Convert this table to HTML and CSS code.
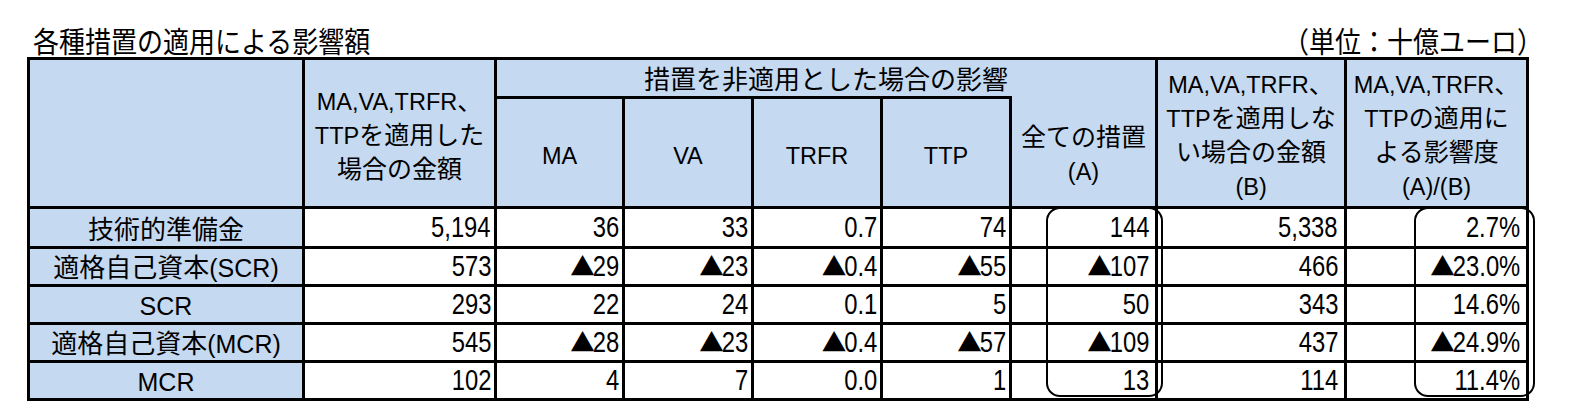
FILE: index.html
```html
<!DOCTYPE html>
<html lang="ja">
<head>
<meta charset="utf-8">
<title>各種措置の適用による影響額</title>
<link rel="stylesheet" href="styles.css">
</head>
<body>
<div class="page">
  <div class="caption">
    <div class="title">各種措置の適用による影響額</div>
    <div class="unit">（単位：十億ユーロ）</div>
  </div>
  <div class="wrap">
    <table class="grid">
      <colgroup>
        <col class="c-label">
        <col class="c-applied">
        <col class="c-ma">
        <col class="c-va">
        <col class="c-trfr">
        <col class="c-ttp">
        <col class="c-all">
        <col class="c-none">
        <col class="c-ratio">
      </colgroup>
      <thead>
        <tr class="h1">
          <th rowspan="2"></th>
          <th rowspan="2"><span class="l">MA,VA,TRFR</span>、<br><span class="l">TTP</span>を適用した<br>場合の金額</th>
          <th colspan="5" class="group">措置を非適用とした場合の影響</th>
          <th rowspan="2"><span class="l">MA,VA,TRFR</span>、<br><span class="l">TTP</span>を適用しな<br>い場合の金額<br><span class="l">(B)</span></th>
          <th rowspan="2"><span class="l">MA,VA,TRFR</span>、<br><span class="l">TTP</span>の適用に<br>よる影響度<br><span class="l">(A)/(B)</span></th>
        </tr>
        <tr class="h2">
          <th><span class="l">MA</span></th>
          <th><span class="l">VA</span></th>
          <th><span class="l">TRFR</span></th>
          <th><span class="l">TTP</span></th>
          <th class="all">全ての措置<br><span class="l">(A)</span></th>
        </tr>
      </thead>
      <tbody>
        <tr class="first">
          <th>技術的準備金</th>
          <td><span class="v">5,194</span></td>
          <td><span class="v">36</span></td>
          <td><span class="v">33</span></td>
          <td><span class="v">0.7</span></td>
          <td><span class="v">74</span></td>
          <td class="wide"><span class="v">144</span></td>
          <td class="wide"><span class="v">5,338</span></td>
          <td class="wide"><span class="v">2.7%</span></td>
        </tr>
        <tr>
          <th>適格自己資本<span class="l">(SCR)</span></th>
          <td><span class="v">573</span></td>
          <td><span class="v"><span class="tri">▲</span>29</span></td>
          <td><span class="v"><span class="tri">▲</span>23</span></td>
          <td><span class="v"><span class="tri">▲</span>0.4</span></td>
          <td><span class="v"><span class="tri">▲</span>55</span></td>
          <td class="wide"><span class="v"><span class="tri">▲</span>107</span></td>
          <td class="wide"><span class="v">466</span></td>
          <td class="wide"><span class="v"><span class="tri">▲</span>23.0%</span></td>
        </tr>
        <tr>
          <th><span class="l">SCR</span></th>
          <td><span class="v">293</span></td>
          <td><span class="v">22</span></td>
          <td><span class="v">24</span></td>
          <td><span class="v">0.1</span></td>
          <td><span class="v">5</span></td>
          <td class="wide"><span class="v">50</span></td>
          <td class="wide"><span class="v">343</span></td>
          <td class="wide"><span class="v">14.6%</span></td>
        </tr>
        <tr>
          <th>適格自己資本<span class="l">(MCR)</span></th>
          <td><span class="v">545</span></td>
          <td><span class="v"><span class="tri">▲</span>28</span></td>
          <td><span class="v"><span class="tri">▲</span>23</span></td>
          <td><span class="v"><span class="tri">▲</span>0.4</span></td>
          <td><span class="v"><span class="tri">▲</span>57</span></td>
          <td class="wide"><span class="v"><span class="tri">▲</span>109</span></td>
          <td class="wide"><span class="v">437</span></td>
          <td class="wide"><span class="v"><span class="tri">▲</span>24.9%</span></td>
        </tr>
        <tr>
          <th><span class="l">MCR</span></th>
          <td><span class="v">102</span></td>
          <td><span class="v">4</span></td>
          <td><span class="v">7</span></td>
          <td><span class="v">0.0</span></td>
          <td><span class="v">1</span></td>
          <td class="wide"><span class="v">13</span></td>
          <td class="wide"><span class="v">114</span></td>
          <td class="wide"><span class="v">11.4%</span></td>
        </tr>
      </tbody>
    </table>
    <div class="bracket b-all"></div>
    <div class="bracket b-ratio"></div>
  </div>
</div>
</body>
</html>
```
FILE: styles.css
```css
body {
  margin: 0;
  background: #ffffff;
  color: #000000;
  font-family: "Noto Sans CJK JP", sans-serif;
}

.page {
  padding-left: 27px;
}

.caption {
  display: flex;
  justify-content: space-between;
  align-items: flex-end;
  width: 1502px;
  height: 57px;
  box-sizing: border-box;
  padding-bottom: 2px;
  font-size: 26px;
  line-height: 27px;
}

/* the sheet's lettering is slightly taller than it is wide */
.title,
.unit {
  transform: scaleY(1.12);
  transform-origin: 50% 100%;
}

.title {
  padding-left: 6px;
}

.unit {
  margin-right: -14px;
}

.wrap {
  position: relative;
  width: 1502px;
}

.grid {
  border-collapse: collapse;
  table-layout: fixed;
  width: 1502px;
}

.c-label { width: 275px; }
.c-applied { width: 192px; }
.c-ma { width: 128px; }
.c-va { width: 129px; }
.c-trfr { width: 129px; }
.c-ttp { width: 129px; }
.c-all { width: 146px; }
.c-none { width: 189px; }
.c-ratio { width: 182px; }

.grid th,
.grid td {
  border: 3px solid #000000;
  padding: 0;
}

.grid thead th {
  background: #c5d9f1;
  font-weight: normal;
  font-size: 25px;
  line-height: 34px;
  text-align: center;
  vertical-align: middle;
}

.grid thead th.group {
  font-size: 26px;
}

.grid thead .l {
  font-size: 23.5px;
  line-height: 1;
}

.grid .h1 { height: 39px; }
.grid .h2 { height: 110px; }

.grid thead th.all {
  border-top-style: hidden;
}

.grid tbody tr { height: 38px; }
.grid tbody tr.first { height: 40px; }

.grid tbody th {
  background: #c5d9f1;
  font-weight: normal;
  font-size: 26px;
  line-height: 1;
  text-align: center;
  vertical-align: middle;
}

.grid tbody td {
  background: #ffffff;
  text-align: right;
  vertical-align: middle;
  padding-right: 3px;
  font-family: "Liberation Sans", Arial, sans-serif;
  font-size: 29px;
  line-height: 1;
}

.grid tbody td.wide {
  padding-right: 6px;
}

/* the sheet's figures are drawn in a narrow face: condense them from the right edge */
.v {
  display: inline-block;
  transform: scaleX(0.82);
  transform-origin: 100% 50%;
}

.l {
  font-family: "Liberation Sans", Arial, sans-serif;
  font-size: 25px;
  line-height: 1;
}

.tri {
  display: inline-block;
  font-family: "Noto Sans CJK JP", sans-serif;
  font-size: 25px;
  transform: scaleX(1.2);
}

.bracket {
  position: absolute;
  border: 2px solid #000000;
  border-radius: 14px;
  pointer-events: none;
}

.b-all {
  left: 1019px;
  top: 150px;
  width: 113px;
  height: 186px;
}

.b-ratio {
  left: 1387px;
  top: 150px;
  width: 117px;
  height: 186px;
}
```
